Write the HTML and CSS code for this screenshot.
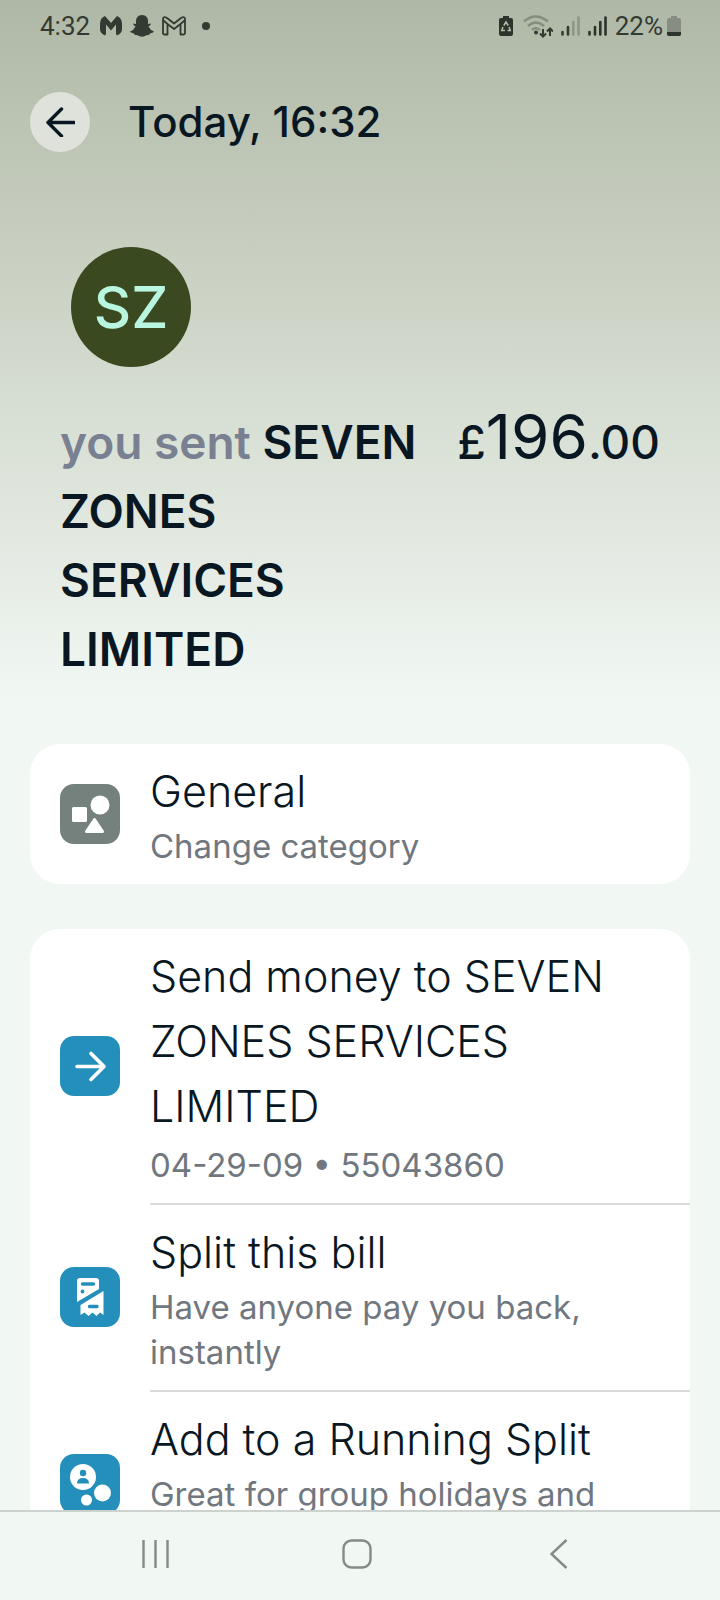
FILE: index.html
```html
<!DOCTYPE html>
<html lang="en">
<head>
<meta charset="utf-8">
<meta name="viewport" content="width=device-width, initial-scale=1">
<title>Today, 16:32</title>
<link rel="stylesheet" href="styles.css">
</head>
<body>
<div class="screen">
  <div class="content">
    <div class="statusbar">
      <div class="status-group">
        <span class="clock time">4:32</span>
        <svg width="22" height="20" viewBox="0 0 22 20"><path fill="#323a31" d="M5 0L11 7 17 0Q22 2 22 8V13Q22 17 17 19.500L16 18V8.500L11 14.500 6 8.500V18L5 19.500Q0 17 0 13V8Q0 2 5 0Z"/></svg>
        <svg width="24" height="22" viewBox="0 0 24 22"><path fill="#323a31" d="M12 0C16 0 18 3 18 6V9L21 8.500Q21 10 18.500 11.500 20 15 24 16.500 23 18 20 18.500L19 20Q17 19.500 15 21 12 22.500 9 21 7 19.500 5 20L4 18.500Q1 18 0 16.500 4 15 5.500 11.500 3 10 3 8.500L6 9V6C6 3 8 0 12 0Z"/></svg>
        <svg width="24" height="20" viewBox="0 0 24 20"><path fill="none" stroke="#323a31" stroke-width="1.800" stroke-linejoin="round" d="M1 17V3Q1 0 5 2L12 7.500 19 2Q23 0 23 3V17Q23 18.500 21.500 18.500H18.500V8L12 13 5.500 8V18.500H2.500Q1 18.500 1 17ZM1.500 4.500L5.500 8M22.500 4.500L18.500 8"/></svg>
        <span class="status-dot"></span>
      </div>
      <div class="status-group">
        <svg class="saver" width="14" height="20" viewBox="0 0 14 20"><path fill="#2b332a" d="M4 0H10V2H12Q14 2 14 4V18Q14 20 12 20H2Q0 20 0 18V4Q0 2 2 2H4Z"/><path fill="none" stroke="#b3bca9" stroke-width="1.500" d="M4.800 9.500L7 6 9.200 9.500M10 11L11.300 14.500H8.500M3.900 11L2.700 14.500H6"/></svg>
        <svg width="30" height="23" viewBox="0 0 30 23"><g fill="none" stroke="#858e7e" stroke-width="2.400"><path d="M1 6.500Q12.500-3.500 25 6.500"/><path d="M5 11Q12.500 4 21 11"/><path d="M9 15Q12.500 11.500 17 15"/></g><circle cx="13" cy="17.500" r="2" fill="#323a31"/><path fill="none" stroke="#323a31" stroke-width="2" d="M20 14V21M17 18.500L20 21.500 23 18.500M27 21V14M24 16.500L27 13.500 30 16.500"/></svg>
        <svg width="19" height="20" viewBox="0 0 19 20"><path stroke="#323a31" stroke-width="2.600" stroke-linecap="round" d="M1.500 16V18.500M7 11V18.500"/><path stroke="#8e9786" stroke-width="2.600" stroke-linecap="round" d="M12.300 6V18.500M17.500 1.500V18.500"/></svg>
        <svg width="19" height="20" viewBox="0 0 19 20"><path stroke="#2b332a" stroke-width="2.600" stroke-linecap="round" d="M1.500 16V18.500M7 11V18.500M12.300 6V18.500M17.500 1.500V18.500"/></svg>
        <span class="battery"><span class="clock">22%</span>
        <svg width="14" height="20" viewBox="0 0 14 20"><path fill="#878e81" d="M4 0H10V2H12Q14 2 14 4V18Q14 20 12 20H2Q0 20 0 18V4Q0 2 2 2H4Z"/><path fill="#2b332a" d="M0 16H14V18Q14 20 12 20H2Q0 20 0 18Z"/></svg></span>
      </div>
    </div>

    <header class="topbar">
      <button class="back" type="button" aria-label="Back"><svg width="30" height="30" viewBox="0 0 30 30"><path fill="none" stroke="#091723" stroke-width="3.400" stroke-linecap="round" stroke-linejoin="round" d="M16.500 2L3 15.500 16.500 29M3 15.500H29"/></svg></button>
      <h1 class="title">Today, 16:32</h1>
    </header>

    <section class="summary">
      <div class="avatar">SZ</div>
      <div class="payment">
        <h2 class="payee"><span class="muted">you sent</span> SEVEN ZONES SERVICES LIMITED</h2>
        <p class="amount">£<span class="pounds">196</span>.00</p>
      </div>
    </section>

    <main class="cards">
      <section class="card">
        <button class="row" type="button">
          <svg class="tile" viewBox="0 0 60 60"><rect width="60" height="60" rx="14" fill="#74817c"/><rect x="12" y="23" width="15" height="15" rx="1.500" fill="#fff"/><circle cx="40" cy="21" r="9.500" fill="#fff"/><path fill="#fff" stroke="#fff" stroke-width="3" stroke-linejoin="round" d="M34.500 35.500L26.500 47.500H42.500Z"/></svg>
          <span class="text"><span class="name">General</span><span class="detail">Change category</span></span>
        </button>
      </section>

      <section class="card">
        <button class="row" type="button">
          <svg class="tile" viewBox="0 0 60 60"><rect width="60" height="60" rx="14" fill="#248fba"/><path fill="none" stroke="#fff" stroke-width="3.600" stroke-linecap="round" stroke-linejoin="round" d="M17 30.500H44M31 17.500L44 30.500 31 43.500"/></svg>
          <span class="text"><span class="name">Send money to SEVEN ZONES SERVICES LIMITED</span><span class="detail account">04-29-09 • 55043860</span></span>
        </button>
        <button class="row" type="button">
          <svg class="tile" viewBox="0 0 60 60"><rect width="60" height="60" rx="14" fill="#248fba"/><path fill="#fff" d="M17 14Q17 11 20 11H36Q39 11 39 14V22L17 35ZM43.500 24V48L40 45.500 36.500 49 32.500 45.500 28.500 49 24.500 45.500 20.500 48V38Z"/><path stroke="#248fba" stroke-width="3.400" stroke-linecap="round" d="M22.500 17H33.500M29.500 39.500H37"/><circle cx="22.500" cy="24.500" r="1.900" fill="#248fba"/></svg>
          <span class="text"><span class="name">Split this bill</span><span class="detail">Have anyone pay you back, instantly</span></span>
        </button>
        <button class="row row-tall" type="button">
          <svg class="tile" viewBox="0 0 60 60"><rect width="60" height="60" rx="14" fill="#248fba"/><g fill="#fff"><circle cx="23" cy="23" r="13"/><circle cx="42.500" cy="39" r="8.500"/><circle cx="26.500" cy="46" r="5.500"/></g><circle cx="23" cy="19" r="3.200" fill="#248fba"/><path fill="#248fba" d="M17 29.500Q17 24 23 24T29 29.500Z"/></svg>
          <span class="text"><span class="name">Add to a Running Split</span><span class="detail">Great for group holidays and</span></span>
        </button>
      </section>
    </main>
  </div>

  <nav class="navbar">
    <button type="button" aria-label="Recent apps"><svg width="30" height="30" viewBox="0 0 30 30"><path stroke="#848a85" stroke-width="2.400" d="M3.500 1V29M15.500 1V29M27.500 1V29"/></svg></button>
    <button type="button" aria-label="Home"><svg width="30" height="30" viewBox="0 0 30 30"><rect x="1.500" y="1.500" width="27" height="27" rx="8" fill="none" stroke="#848a85" stroke-width="2.400"/></svg></button>
    <button type="button" aria-label="Back"><svg width="30" height="30" viewBox="0 0 30 30"><path fill="none" stroke="#848a85" stroke-width="2.400" d="M22.500 1L7.500 15 22.500 29"/></svg></button>
  </nav>
</div>
</body>
</html>
```
FILE: styles.css
```css
* {
  box-sizing: border-box;
}

body {
  margin: 0;
  background: #f1f7f3;
  color: #091723;
  font-family: Inter, "Liberation Sans", sans-serif;
}

button {
  border: 0;
  padding: 0;
  background: none;
  color: inherit;
  font: inherit;
  text-align: left;
}

svg {
  display: block;
  flex: none;
}

.screen {
  display: flex;
  flex-direction: column;
  height: 100vh;
}

.content {
  flex: 1;
  min-height: 0;
  overflow: hidden;
  background: linear-gradient(#afb8a6 0, #bbc3b3 120px, #d5dcd0 390px, #f1f7f3 700px);
}

.statusbar {
  display: flex;
  justify-content: space-between;
  align-items: center;
  height: 52px;
  padding: 0 39px 0 40px;
  color: #323a31;
}

.status-group {
  display: flex;
  align-items: center;
  gap: 8px;
}

.clock {
  font-family: Roboto, sans-serif;
  font-size: 26px;
  line-height: 32px;
}

.time,
.saver {
  margin-right: 2px;
}

.battery {
  display: flex;
  align-items: center;
  gap: 4px;
}

.status-dot {
  width: 8px;
  height: 8px;
  margin-left: 8px;
  border-radius: 50%;
  background: #323a31;
}

.topbar {
  display: flex;
  align-items: center;
  gap: 38px;
  padding: 40px 30px 0;
}

.back {
  display: grid;
  place-items: center;
  width: 60px;
  height: 60px;
  border-radius: 50%;
  background: #dee2da;
}

.title {
  margin: 0;
  font-size: 42px;
  font-weight: 500;
  line-height: 60px;
}

.summary {
  padding: 95px 60px 0;
}

.avatar {
  display: grid;
  place-items: center;
  width: 120px;
  height: 120px;
  margin-left: 11px;
  border-radius: 50%;
  background: #3b4920;
  color: #b9f6e0;
  font-size: 58px;
  font-weight: 500;
}

.payment {
  display: flex;
  justify-content: space-between;
  align-items: baseline;
  gap: 32px;
  margin-top: 35px;
}

.payee {
  margin: 0;
  font-size: 46px;
  font-weight: 600;
  line-height: 69px;
}

.muted {
  color: #788091;
}

.amount {
  margin: 0;
  font-size: 46px;
  font-weight: 500;
  line-height: 69px;
  white-space: nowrap;
}

.pounds {
  font-size: 62px;
  font-weight: 400;
}

.cards {
  display: grid;
  gap: 45px;
  padding: 60px 30px 45px;
}

.card {
  border-radius: 30px;
  background: #fff;
}

.row {
  display: flex;
  align-items: center;
  gap: 30px;
  width: 100%;
  padding-left: 30px;
}

.row-tall {
  min-height: 187px;
}

.tile {
  width: 60px;
  height: 60px;
}

.text {
  display: flex;
  flex: 1;
  flex-direction: column;
  align-self: stretch;
  padding: 15px 0;
}

.row + .row .text {
  border-top: 2px solid #d9dbdb;
}

.name {
  padding-right: 60px;
  font-size: 43px;
  font-weight: 350;
  line-height: 65px;
}

.detail {
  padding-right: 60px;
  color: #71777e;
  font-size: 33px;
  font-weight: 400;
  line-height: 45px;
}

.account {
  padding-top: 4px;
}

.navbar {
  display: flex;
  justify-content: space-between;
  align-items: center;
  height: 90px;
  padding: 0 146px 4px 140px;
  border-top: 2px solid #ccd2ce;
  background: #f1f7f3;
}
```
